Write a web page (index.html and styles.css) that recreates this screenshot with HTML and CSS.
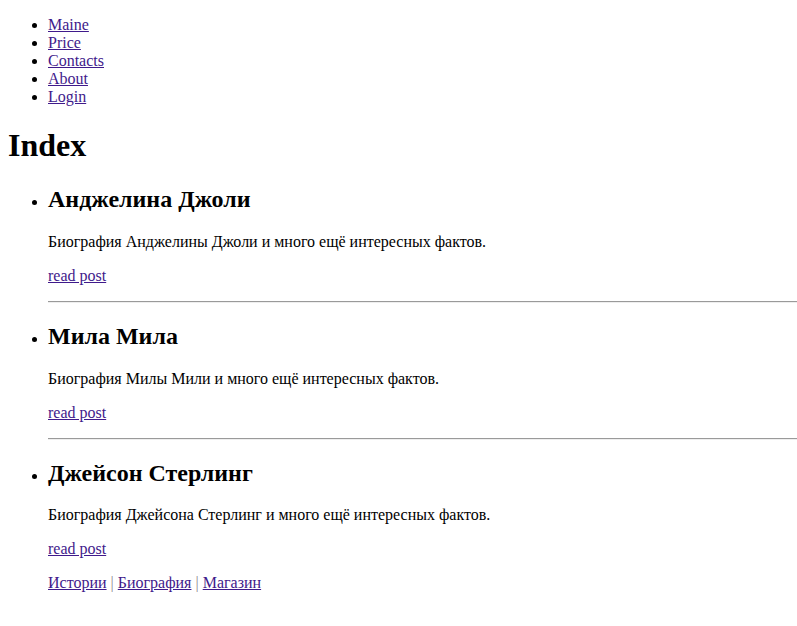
FILE: index.html
```html
<!DOCTYPE html>
<html lang="ru">
<head>
<meta charset="utf-8">
<title>Index</title>
<link rel="stylesheet" href="styles.css">
</head>
<body class="page">
<ul class="nav">
  <li><a class="link" href="#">Maine</a></li>
  <li><a class="link" href="#">Price</a></li>
  <li><a class="link" href="#">Contacts</a></li>
  <li><a class="link" href="#">About</a></li>
  <li><a class="link" href="#">Login</a></li>
</ul>
<h1 class="title">Index</h1>
<ul class="posts">
  <li class="post">
    <h2 class="post-title">Анджелина Джоли</h2>
    <p class="post-text">Биография Анджелины Джоли и много ещё интересных фактов.</p>
    <p class="post-text"><a class="link" href="#">read post</a></p>
    <hr class="sep">
  </li>
  <li class="post">
    <h2 class="post-title">Мила Мила</h2>
    <p class="post-text">Биография Милы Мили и много ещё интересных фактов.</p>
    <p class="post-text"><a class="link" href="#">read post</a></p>
    <hr class="sep">
  </li>
  <li class="post">
    <h2 class="post-title">Джейсон Стерлинг</h2>
    <p class="post-text">Биография Джейсона Стерлинг и много ещё интересных фактов.</p>
    <p class="post-text"><a class="link" href="#">read post</a></p>
    <p class="footer-links"><a class="link" href="#">Истории</a> <span class="pipe">|</span> <a class="link" href="#">Биография</a> <span class="pipe">|</span> <a class="link" href="#">Магазин</a></p>
  </li>
</ul>
</body>
</html>
```
FILE: styles.css
```css
html, body {
  background: #fff;
}
.page {
  margin: 0 0 8px 8px;
  padding-top: 0;
  font-family: "Liberation Serif", "Times New Roman", serif;
  font-size: 16px;
  color: #000;
}
.nav, .posts {
  margin: 16px 0;
  padding-left: 40px;
  list-style: disc;
}
.link {
  color: #3f1a8b;
  text-decoration: underline;
}
.title {
  font-size: 32px;
  font-weight: bold;
  margin: 21.44px 0;
}
.post-title {
  font-size: 24px;
  font-weight: bold;
  margin: 19.92px 0;
}
.post-text, .footer-links {
  margin: 16px 0;
}
.pipe {
  color: #8c8c8c;
}
.sep {
  display: block;
  box-sizing: border-box;
  width: 100%;
  margin: 8px 0;
  border: 0;
  border-top: 1px solid #9a9a9a;
  border-bottom: 1px solid #eeeeee;
  height: 2px;
}
```
